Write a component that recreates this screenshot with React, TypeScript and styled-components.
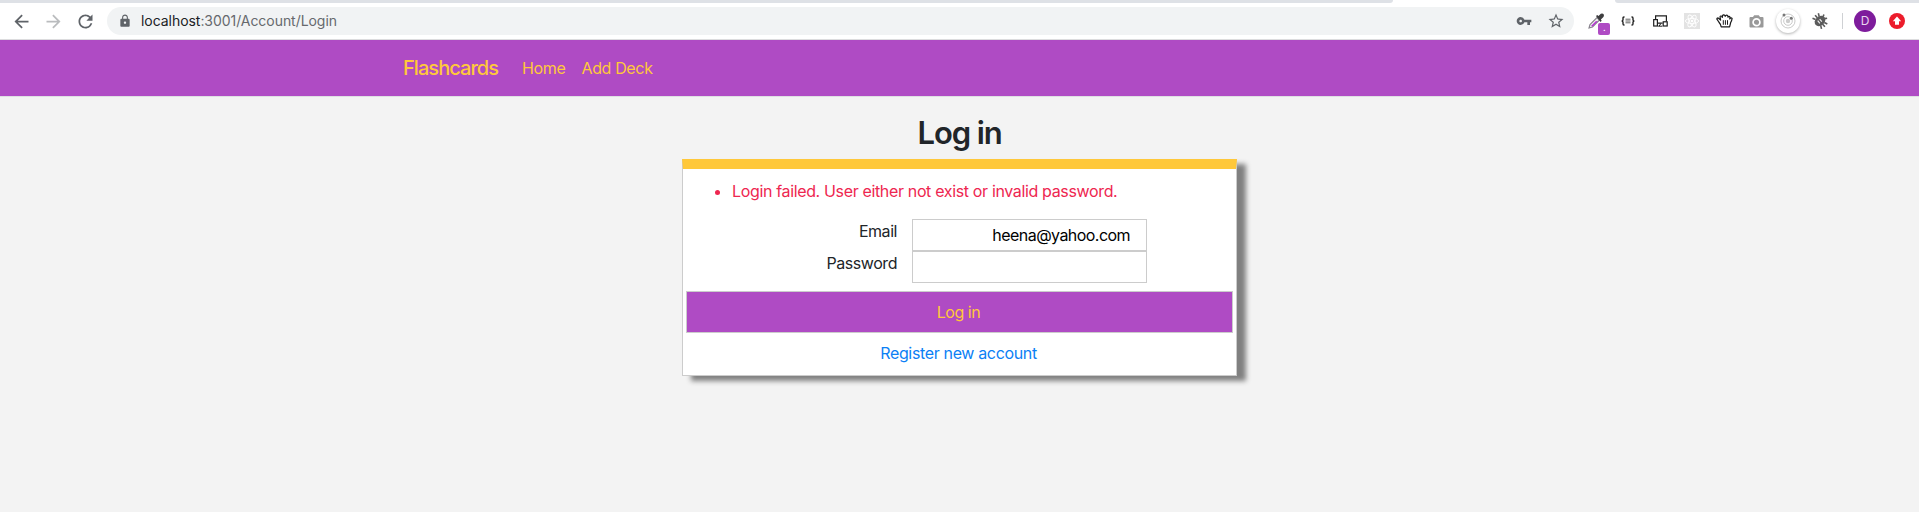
import React, { useState } from 'react';
import styled, { createGlobalStyle } from 'styled-components';
import { MdArrowBack, MdArrowForward, MdRefresh, MdLock, MdVpnKey, MdStarBorder } from 'react-icons/md';

const purple = '#af4bc4';
const amber = '#ffc83a';

const GlobalStyle = createGlobalStyle`
  *, *::before, *::after { box-sizing: border-box; }
  body {
    margin: 0;
    min-height: 100vh;
    background: #f3f3f3;
    color: #212529;
    font-family: Inter, "Liberation Sans", sans-serif;
    font-size: 16px;
    line-height: 24px;
    letter-spacing: -0.35px;
  }
`;

const TabStrip = styled.div`
  display: flex;
  justify-content: space-between;
  height: 3px;
  background: #fff;
`;

const InactiveTabs = styled.div<{ $width: number; $side: 'left' | 'right' }>`
  width: ${(p) => p.$width}px;
  background: #dee1e6;
  border-radius: ${(p) => (p.$side === 'left' ? '0 0 6px 0' : '0 0 0 6px')};
`;

const Toolbar = styled.div`
  display: flex;
  align-items: center;
  height: 37px;
  padding: 0 6px 0 5px;
  background: #fff;
  border-bottom: 1px solid #dcdcde;
`;

const Slot = styled.div<{ $color?: string }>`
  position: relative;
  display: flex;
  align-items: center;
  justify-content: center;
  flex: none;
  width: 32px;
  height: 36px;
  color: ${(p) => p.$color ?? '#5f6368'};
`;

const Omnibox = styled.div`
  display: flex;
  align-items: center;
  flex: 1;
  height: 28px;
  margin: 0 6px;
  padding: 0 2px 0 11px;
  border-radius: 14px;
  background: #f1f3f4;
  color: #5f6368;
`;

const Address = styled.div`
  flex: 1;
  margin-left: 9px;
  font-size: 14px;
  letter-spacing: -0.05px;
  color: #66696d;
`;

const Host = styled.span`
  color: #202124;
`;

const Badge = styled.span`
  position: absolute;
  left: 18px;
  top: 20px;
  width: 12px;
  height: 12px;
  border-radius: 2px;
  background: ${purple};
  color: #fff;
  font-size: 9px;
  line-height: 9px;
  text-align: center;
`;

const Divider = styled.div`
  width: 1px;
  height: 16px;
  margin: 0 6px;
  background: #cfd1d4;
`;

const Avatar = styled.div`
  width: 22px;
  height: 22px;
  border-radius: 50%;
  background: #7e1c9c;
  color: #e9d5ef;
  font-size: 12px;
  line-height: 22px;
  text-align: center;
`;

const Orb = styled.div`
  display: flex;
  align-items: center;
  justify-content: center;
  width: 24px;
  height: 24px;
  border-radius: 50%;
  background: #fff;
  box-shadow: 0 1px 3px rgba(0, 0, 0, 0.3);
`;

const Navbar = styled.nav`
  display: flex;
  align-items: center;
  height: 57px;
  padding: 0 403px;
  background: ${purple};
  border-bottom: 1px solid #dedfe2;
`;

const Brand = styled.a`
  width: 119px;
  font-size: 20px;
  font-weight: 500;
  letter-spacing: -0.95px;
  color: ${amber};
`;

const NavLink = styled.a`
  margin-right: 16px;
  color: ${amber};
`;

const Page = styled.main`
  display: flex;
  flex-direction: column;
  align-items: center;
`;

const Title = styled.h1`
  margin: 17px 0 7px;
  font-size: 31px;
  line-height: 38px;
  font-weight: 600;
  letter-spacing: -1.1px;
`;

const Card = styled.form`
  width: 555px;
  height: 217px;
  padding: 10px 3px 0;
  background: #fff;
  border: 1px solid #ccc;
  border-top: 10px solid ${amber};
  box-shadow: 9px 5px 5px #808080;
`;

const Errors = styled.ul`
  margin: 0 0 16px;
  padding-left: 46px;
  color: #ee2650;
`;

const Field = styled.div`
  display: flex;
  height: 32px;
`;

const Label = styled.label`
  width: 226px;
  padding-right: 15px;
  text-align: right;
  letter-spacing: -0.45px;
`;

const Input = styled.input`
  width: 235px;
  height: 32px;
  padding: 0 16px;
  border: 1px solid #ccc;
  background: #fff;
  color: #000;
  font: inherit;
  letter-spacing: -0.55px;
  text-align: right;
  outline: none;
`;

const Submit = styled.button`
  display: block;
  width: 100%;
  height: 42px;
  margin: 8px 0 8px;
  padding: 0 2px 0 0;
  border: 1px solid #ccc;
  background: ${purple};
  color: ${amber};
  font: inherit;
  letter-spacing: -0.45px;
`;

const Register = styled.a`
  display: block;
  padding-right: 2px;
  text-align: center;
  color: #0b80f5;
`;

const Dropper = () => (
  <svg width="18" height="18" viewBox="0 0 18 18">
    <path d="M2 16l1-3.5L10 5.5l2.5 2.5-7 7z" fill="#eee" stroke="#85808a" strokeWidth="1.1" />
    <path d="M4 14l5-5 1.5 0.5-5 5z" fill="#b530d6" />
    <path d="M9 4l1.2-1 1.3 1 2.3-2.3q2-.8 3 .8.6 1.400-.6 2.800L13.900 7.500l.8 1.300-1.200 1.100z" fill="#3e3e40" />
  </svg>
);

const Braces = () => (
  <svg width="14" height="10" viewBox="0 0 14 10" fill="none" stroke="#222" strokeWidth="1.4">
    <path d="M3.500 1H3Q2 1 2 2.200V3.800Q2 5 .6 5 2 5 2 6.200V7.800Q2 9 3 9h.5M10.500 1h.5q1 0 1 1.200v1.600Q12 5 13.400 5 12 5 12 6.200v1.600Q12 9 11 9h-.5" />
    <path d="M4.500 3.200h5M4.500 5h5M4.500 6.800h5" strokeWidth=".9" stroke="#555" />
  </svg>
);

const Devices = () => (
  <svg width="15" height="12" viewBox="0 0 15 12" fill="none" stroke="#1f1f1f" strokeWidth="1.200">
    <path d="M2.600 4.500V.9h10.800V6.500M4.800 8.200h4.800" />
    <path d="M7.200 8.500v1.500L5.500 11.200h3.800" strokeWidth="1" />
    <rect x=".7" y="4.600" width="3.700" height="6.400" />
    <rect x="10.200" y="6.800" width="4" height="4.200" />
  </svg>
);

const ReactMark = () => (
  <svg width="16" height="16" viewBox="0 0 16 16">
    <rect width="16" height="16" fill="#e3e3e3" />
    <g fill="none" stroke="#fff" strokeWidth=".9">
      <ellipse cx="8" cy="8" rx="6.600" ry="2.600" />
      <ellipse cx="8" cy="8" rx="6.600" ry="2.600" transform="rotate(60 8 8)" />
      <ellipse cx="8" cy="8" rx="6.600" ry="2.600" transform="rotate(120 8 8)" />
    </g>
    <circle cx="8" cy="8" r="1.300" fill="#fff" />
  </svg>
);

const Hand = () => (
  <svg width="17" height="14" viewBox="0 0 17 14" fill="none" stroke="#1a1a1a" strokeWidth="1.200" strokeLinejoin="round">
    <path d="M5.200 12.900Q4.600 10 2.800 8L.9 5.200Q.8 3.800 2.200 4L4.600 6 4 2.700Q4.700 1.500 5.800 2.300L6.300 3.500Q6.300 1 7.600.9 8.900.8 9.200 2.300 10 .7 11.200 1.300 12 1.900 12 3.200 13 1.900 13.900 2.800L13.800 4.900Q15 3.200 16.100 4.500 15.900 6.500 14.700 8.500L13.600 12.900z" />
    <path d="M7.300 6.200v4.600M9.400 6.200v4.600M11.500 6.200v4.600" strokeWidth="1" />
  </svg>
);

const Camera = () => (
  <svg width="15" height="13" viewBox="0 0 15 13">
    <path d="M1.500 2H4L5.200.2h4.600L11 2h2.500q1 0 1 1v8.500q0 1-1 1h-12q-1 0-1-1V3q0-1 1-1z" fill="#999" />
    <circle cx="7.500" cy="7.200" r="3.400" fill="none" stroke="#fff" strokeWidth="1.700" />
  </svg>
);

const Orbit = () => (
  <svg width="18" height="18" viewBox="0 0 18 18" fill="none" stroke="#bbb">
    <circle cx="9" cy="9" r="7" strokeWidth=".8" />
    <circle cx="9" cy="9" r="4.300" strokeWidth=".8" />
    <circle cx="9" cy="9" r="2.200" fill="#ccc" stroke="none" />
    <circle cx="5" cy="3" r="1.500" fill="#777" stroke="none" />
    <circle cx="12.300" cy="6.200" r="1.500" fill="#777" stroke="none" />
  </svg>
);

const Bug = () => (
  <svg width="16" height="16" viewBox="0 0 16 16">
    <g transform="rotate(50 8 8)">
      <ellipse cx="8" cy="8" rx="4.600" ry="5.800" fill="#5b5b5b" />
      <path d="M1 4.300l3 1.400M.4 8h3.500M1 11.900l3-1.500M15 4.300l-3 1.400M15.600 8h-3.500M15 11.900l-3-1.500M5.500.8l1.200 2M10.500.8l-1.200 2" stroke="#5b5b5b" strokeWidth="1.600" />
      <path d="M6.300 7h3.400M6.300 9.600h3.400" stroke="#f4f4f4" strokeWidth="1.100" />
    </g>
  </svg>
);

const UpdateArrow = () => (
  <svg width="16" height="16" viewBox="0 0 16 16">
    <circle cx="8" cy="8" r="8" fill="#ec1c2b" />
    <path d="M8 3.600L12.200 8.200H10v3.600H6V8.200H3.800z" fill="#fff" />
  </svg>
);

export default function App() {
  const [email, setEmail] = useState('heena@yahoo.com');
  const [password, setPassword] = useState('');
  return (
    <>
      <GlobalStyle />
      <TabStrip>
        <InactiveTabs $width={1393} $side="left" />
        <InactiveTabs $width={304} $side="right" />
      </TabStrip>
      <Toolbar>
        <Slot><MdArrowBack size={21} /></Slot>
        <Slot $color="#babcbe"><MdArrowForward size={21} /></Slot>
        <Slot><MdRefresh size={21} /></Slot>
        <Omnibox>
          <MdLock size={14} />
          <Address><Host>localhost</Host>:3001/Account/Login</Address>
          <Slot><MdVpnKey size={16} /></Slot>
          <Slot><MdStarBorder size={18} /></Slot>
        </Omnibox>
        <Slot><Dropper /><Badge>.</Badge></Slot>
        <Slot><Braces /></Slot>
        <Slot><Devices /></Slot>
        <Slot><ReactMark /></Slot>
        <Slot><Hand /></Slot>
        <Slot><Camera /></Slot>
        <Slot><Orb><Orbit /></Orb></Slot>
        <Slot><Bug /></Slot>
        <Divider />
        <Slot><Avatar>D</Avatar></Slot>
        <Slot><UpdateArrow /></Slot>
      </Toolbar>
      <Navbar>
        <Brand>Flashcards</Brand>
        <NavLink>Home</NavLink>
        <NavLink>Add Deck</NavLink>
      </Navbar>
      <Page>
        <Title>Log in</Title>
        <Card onSubmit={(e) => e.preventDefault()}>
          <Errors>
            <li>Login failed. User either not exist or invalid password.</li>
          </Errors>
          <Field>
            <Label htmlFor="email">Email</Label>
            <Input id="email" value={email} onChange={(e) => setEmail(e.target.value)} />
          </Field>
          <Field>
            <Label htmlFor="password">Password</Label>
            <Input id="password" type="password" value={password} onChange={(e) => setPassword(e.target.value)} />
          </Field>
          <Submit>Log in</Submit>
          <Register>Register new account</Register>
        </Card>
      </Page>
    </>
  );
}
